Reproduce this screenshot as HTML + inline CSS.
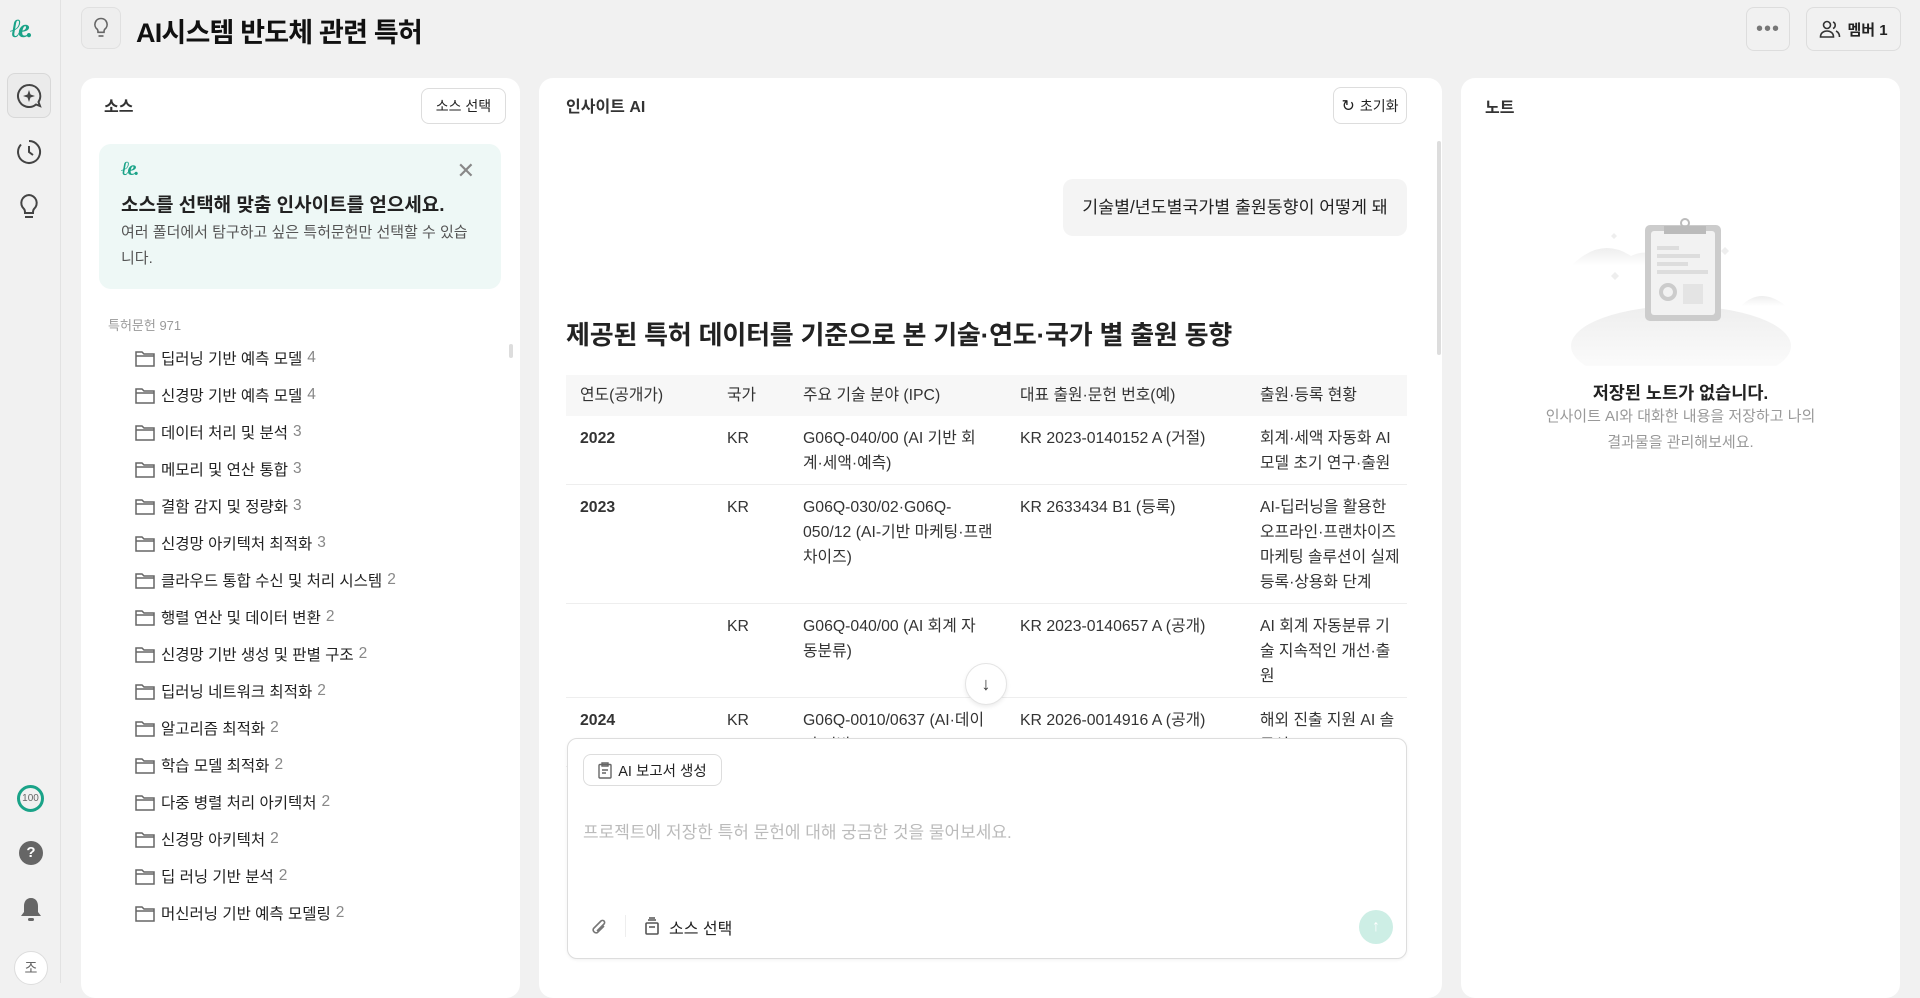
<!DOCTYPE html>
<html><head><meta charset="utf-8"><style>
*{box-sizing:border-box;margin:0;padding:0}
body{width:1920px;height:983px;overflow:hidden;background:#f1f1f1;font-family:"Liberation Sans","Noto Sans CJK KR",sans-serif;color:#111;position:relative}
.abs{position:absolute}
.rail{left:0;top:0;width:61px;height:983px;border-right:1px solid #e2e2e2;background:#f1f1f1}
.panel{position:absolute;top:78px;height:920px;background:#fff;border-radius:14px}
.btn{position:absolute;border:1px solid #ddd;border-radius:8px;background:#fff;display:flex;align-items:center;justify-content:center;font-size:14px;color:#222}
.li{position:absolute;left:135px;font-size:15.5px;color:#222;display:flex;align-items:center;height:24px}
.li svg{margin-right:6px}
.li span.n{color:#888;margin-left:5px}
table{border-collapse:collapse;font-size:15.8px;color:#333;table-layout:fixed}
td,th{vertical-align:top;text-align:left;font-weight:normal;line-height:25px;white-space:nowrap;overflow:hidden}
th{padding:8px 14px;height:41px;background:#f7f7f7}
td{padding:10px 14px 8px 14px;border-bottom:1px solid #eee}
</style></head><body>
<div class="abs rail">
 <div class="abs" style="left:10px;top:14px;color:#1aa388;font:bold italic 26px 'Liberation Serif',serif;letter-spacing:-3px">ℓe.</div>
 <div class="abs" style="left:7px;top:73px;width:44px;height:45px;border:1px solid #d8d8d8;border-radius:8px;background:#ebebeb"></div>
 <svg class="abs" style="left:16px;top:83px" width="26" height="26" viewBox="0 0 26 26" fill="none" stroke="#444" stroke-width="2"><path d="M13 2a11 11 0 1 0 7 19.5L24 23l-1.5-4A11 11 0 0 0 13 2z"/><path d="M13 7l1.5 4.5L19 13l-4.5 1.5L13 19l-1.5-4.5L7 13l4.5-1.5z" fill="#444" stroke="none"/></svg>
 <svg class="abs" style="left:16px;top:139px" width="26" height="26" viewBox="0 0 26 26" fill="none" stroke="#444" stroke-width="2"><path d="M13 2a11 11 0 1 1-8 3.5"/><path d="M13 7v6l4 3"/></svg>
 <svg class="abs" style="left:18px;top:193px" width="22" height="28" viewBox="0 0 22 28" fill="none" stroke="#444" stroke-width="2"><path d="M11 2a8 8 0 0 0-5 14c1 1 1 2 1 4h8c0-2 0-3 1-4a8 8 0 0 0-5-14z"/><path d="M7 24h8"/></svg>
 <div class="abs" style="left:17px;top:785px;width:27px;height:27px;border:3px solid #1aa388;border-radius:50%;font-size:10px;color:#666;text-align:center;line-height:21px">100</div>
 <div class="abs" style="left:19px;top:841px;width:24px;height:24px;border-radius:50%;background:#666;color:#fff;font-weight:bold;font-size:15px;text-align:center;line-height:24px">?</div>
 <svg class="abs" style="left:19px;top:896px" width="24" height="26" viewBox="0 0 24 26"><path d="M12 2c-5 0-7 4-7 8v6l-3 4h20l-3-4v-6c0-4-2-8-7-8z" fill="#666"/><rect x="9" y="22" width="6" height="3" rx="1.5" fill="#666"/></svg>
 <div class="abs" style="left:14px;top:951px;width:34px;height:34px;border:1px solid #ddd;border-radius:50%;background:#fff;font-size:14px;color:#666;text-align:center;line-height:32px">조</div>
</div>
<div class="abs" style="left:81px;top:7px;width:40px;height:42px;border:1px solid #e0e0e0;border-radius:8px;background:#eee"></div>
<svg class="abs" style="left:93px;top:17px" width="16" height="22" viewBox="0 0 16 22" fill="none" stroke="#666" stroke-width="1.6"><path d="M8 1.5a6 6 0 0 0-3.7 10.8c.7.7.7 1.5.7 3h6c0-1.5 0-2.3.7-3A6 6 0 0 0 8 1.5z"/><path d="M5.5 19h5"/></svg>
<div class="abs" style="left:136px;top:11px;font-size:27px;font-weight:bold;letter-spacing:-0.8px">AI시스템 반도체 관련 특허</div>
<div class="btn" style="left:1746px;top:7px;width:44px;height:44px;background:#f1f1f1;font-size:20px;color:#777;letter-spacing:1px">•••</div>
<div class="btn" style="left:1806px;top:7px;width:95px;height:44px;background:#f1f1f1;font-weight:bold;font-size:15px">
 <svg width="22" height="18" viewBox="0 0 22 18" fill="none" stroke="#333" stroke-width="1.6" style="margin-right:6px"><circle cx="8" cy="5" r="3.5"/><path d="M1.5 17c0-4 3-6 6.5-6s6.5 2 6.5 6z"/><path d="M14 2a3.5 3.5 0 0 1 0 6.5M17 11c2 1 3.5 3 3.5 6"/></svg>멤버 1</div>

<div class="panel" style="left:81px;width:439px">
 <div class="abs" style="left:23px;top:15px;font-size:16px;font-weight:bold;color:#333">소스</div>
 <div class="btn" style="left:340px;top:10px;width:85px;height:36px;font-size:14px">소스 선택</div>
 <div class="abs" style="left:18px;top:66px;width:402px;height:145px;border-radius:12px;background:#eef8f6">
  <div class="abs" style="left:22px;top:14px;color:#1aa388;font:bold italic 20px 'Liberation Serif',serif;letter-spacing:-2px">ℓe.</div>
  <div class="abs" style="right:26px;top:14px;font-size:22px;color:#888">✕</div>
  <div class="abs" style="left:22px;top:46px;font-size:19px;font-weight:bold;color:#222">소스를 선택해 맞춤 인사이트를 얻으세요.</div>
  <div class="abs" style="left:22px;top:76px;width:360px;font-size:15px;line-height:26px;color:#555">여러 폴더에서 탐구하고 싶은 특허문헌만 선택할 수 있습니다.</div>
 </div>
 <div class="abs" style="left:27px;top:237px;font-size:13px;color:#999">특허문헌 971</div>
 <div class="abs" style="left:428px;top:266px;width:4px;height:14px;border-radius:2px;background:#ddd"></div>
</div>

<div class="panel" style="left:539px;width:903px;overflow:hidden">
 <div class="abs" style="left:27px;top:15px;font-size:16px;font-weight:bold;color:#333">인사이트 AI</div>
 <div class="btn" style="left:794px;top:9px;width:74px;height:37px;font-size:14px"><span style="font-size:16px;margin-right:5px">↻</span>초기화</div>
 <div class="abs" style="left:898px;top:63px;width:4px;height:214px;background:#ddd;border-radius:2px"></div>
 <div class="abs" style="left:524px;top:101px;width:344px;height:57px;border-radius:10px;background:#f4f4f4;font-size:17.3px;color:#222;line-height:57px;text-align:center">기술별/년도별국가별 출원동향이 어떻게 돼</div>
 <div class="abs" style="left:27px;top:237px;font-size:26px;font-weight:bold;color:#222;letter-spacing:-0.2px">제공된 특허 데이터를 기준으로 본 기술·연도·국가 별 출원 동향</div>
 <table class="abs" style="left:27px;top:297px;width:841px">
  <colgroup><col style="width:147px"><col style="width:76px"><col style="width:217px"><col style="width:240px"><col style="width:161px"></colgroup>
  <tr><th>연도(공개가)</th><th>국가</th><th>주요 기술 분야 (IPC)</th><th>대표 출원·문헌 번호(예)</th><th>출원·등록 현황</th></tr>
  <tr><td><b>2022</b></td><td>KR</td><td>G06Q-040/00 (AI 기반 회<br>계·세액·예측)</td><td>KR 2023-0140152 A (거절)</td><td>회계·세액 자동화 AI<br>모델 초기 연구·출원</td></tr>
  <tr><td><b>2023</b></td><td>KR</td><td>G06Q-030/02·G06Q-<br>050/12 (AI-기반 마케팅·프랜<br>차이즈)</td><td>KR 2633434 B1 (등록)</td><td>AI-딥러닝을 활용한<br>오프라인·프랜차이즈<br>마케팅 솔루션이 실제<br>등록·상용화 단계</td></tr>
  <tr><td></td><td>KR</td><td>G06Q-040/00 (AI 회계 자<br>동분류)</td><td>KR 2023-0140657 A (공개)</td><td>AI 회계 자동분류 기<br>술 지속적인 개선·출<br>원</td></tr>
  <tr><td><b>2024</b></td><td>KR</td><td>G06Q-0010/0637 (AI·데이<br>터 기반)</td><td>KR 2026-0014916 A (공개)</td><td>해외 진출 지원 AI 솔<br>루션</td></tr>
 </table>
 <div class="abs" style="left:426px;top:585px;width:42px;height:42px;border-radius:50%;background:#fff;border:1px solid #e4e4e4;box-shadow:0 2px 4px rgba(0,0,0,.08);text-align:center;line-height:40px;font-size:18px;color:#333">↓</div>
 <div class="abs" style="left:28px;top:660px;width:840px;height:221px;border:1.5px solid #ddd;border-radius:10px;background:#fff;box-shadow:0 1px 3px rgba(0,0,0,.06)">
  <div class="btn" style="left:15px;top:15px;width:139px;height:32px;font-size:14.5px;color:#222"><svg width="14" height="17" viewBox="0 0 14 17" fill="none" stroke="#666" stroke-width="1.4" style="margin-right:6px"><rect x="1" y="2.5" width="12" height="13.5" rx="1"/><path d="M4 1h6v3H4zM4 8h6M4 11h4"/></svg>AI 보고서 생성</div>
  <div class="abs" style="left:15px;top:79px;font-size:17px;color:#bbb">프로젝트에 저장한 특허 문헌에 대해 궁금한 것을 물어보세요.</div>
  <svg class="abs" style="left:22px;top:178px" width="18" height="20" viewBox="0 0 18 20" fill="none" stroke="#777" stroke-width="1.6"><path d="M14 9l-6.5 6.5a3 3 0 0 1-4-4L11 4a2 2 0 0 1 3 3l-7 7"/></svg>
  <div class="abs" style="left:57px;top:176px;width:1px;height:22px;background:#eee"></div>
  <svg class="abs" style="left:77px;top:178px" width="14" height="18" viewBox="0 0 14 18" fill="none" stroke="#555" stroke-width="1.6"><rect x="1" y="6" width="12" height="11" rx="1"/><path d="M3 3h8M4 1h6M4 10h6"/></svg>
  <div class="abs" style="left:101px;top:176px;font-size:16px;color:#222">소스 선택</div>
  <div class="abs" style="left:791px;top:171px;width:34px;height:34px;border-radius:50%;background:#cdeee5;color:#fff;text-align:center;line-height:34px;font-size:16px">↑</div>
 </div>
</div>

<div class="panel" style="left:1461px;width:439px">
 <div class="abs" style="left:24px;top:16px;font-size:16px;font-weight:bold;color:#333">노트</div>
 <svg class="abs" style="left:110px;top:118px" width="220" height="170" viewBox="0 0 220 170">
  <defs><linearGradient id="g" x1="0" y1="0" x2="0" y2="1"><stop offset="0" stop-color="#eee"/><stop offset="1" stop-color="#fff"/></linearGradient></defs>
  <path d="M0 70q30-30 60-10 20-10 40 10z" fill="url(#g)"/>
  <path d="M170 110q20-20 45 0z" fill="url(#g)"/>
  <ellipse cx="110" cy="150" rx="110" ry="40" fill="url(#g)"/>
  <rect x="74" y="29" width="76" height="96" rx="5" fill="#ccc"/>
  <rect x="80" y="35" width="64" height="84" rx="3" fill="#f2f2f2"/>
  <rect x="93" y="30" width="42" height="8" fill="#bbb"/>
  <circle cx="114" cy="27" r="4" fill="none" stroke="#bbb" stroke-width="2"/>
  <rect x="86" y="50" width="22" height="4" fill="#ddd"/><rect x="86" y="58" width="43" height="4" fill="#ddd"/><rect x="86" y="66" width="31" height="4" fill="#ddd"/><rect x="86" y="74" width="51" height="4" fill="#ddd"/>
  <circle cx="97" cy="96" r="7" fill="none" stroke="#ccc" stroke-width="4"/><rect x="112" y="88" width="20" height="20" fill="#e4e4e4"/>
  <path d="M40 80l4-4 4 4-4 4z M150 55l4-4 4 4-4 4z M40 40l3-3 3 3-3 3z" fill="#eee"/>
 </svg>
 <div class="abs" style="left:0;width:439px;top:302px;text-align:center;font-size:17.5px;font-weight:bold;color:#222">저장된 노트가 없습니다.</div>
 <div class="abs" style="left:80px;width:279px;top:326px;text-align:center;font-size:15px;line-height:26px;color:#999">인사이트 AI와 대화한 내용을 저장하고 나의 결과물을 관리해보세요.</div>
</div>

<div class="li" style="top:346px"><svg width="20" height="17" viewBox="0 0 20 17" fill="none" stroke="#666" stroke-width="1.5"><path d="M1 2h6l2 2h10v12H1z"/><path d="M1 6h18"/></svg>딥러닝 기반 예측 모델<span class="n">4</span></div>
<div class="li" style="top:383px"><svg width="20" height="17" viewBox="0 0 20 17" fill="none" stroke="#666" stroke-width="1.5"><path d="M1 2h6l2 2h10v12H1z"/><path d="M1 6h18"/></svg>신경망 기반 예측 모델<span class="n">4</span></div>
<div class="li" style="top:420px"><svg width="20" height="17" viewBox="0 0 20 17" fill="none" stroke="#666" stroke-width="1.5"><path d="M1 2h6l2 2h10v12H1z"/><path d="M1 6h18"/></svg>데이터 처리 및 분석<span class="n">3</span></div>
<div class="li" style="top:457px"><svg width="20" height="17" viewBox="0 0 20 17" fill="none" stroke="#666" stroke-width="1.5"><path d="M1 2h6l2 2h10v12H1z"/><path d="M1 6h18"/></svg>메모리 및 연산 통합<span class="n">3</span></div>
<div class="li" style="top:494px"><svg width="20" height="17" viewBox="0 0 20 17" fill="none" stroke="#666" stroke-width="1.5"><path d="M1 2h6l2 2h10v12H1z"/><path d="M1 6h18"/></svg>결함 감지 및 정량화<span class="n">3</span></div>
<div class="li" style="top:531px"><svg width="20" height="17" viewBox="0 0 20 17" fill="none" stroke="#666" stroke-width="1.5"><path d="M1 2h6l2 2h10v12H1z"/><path d="M1 6h18"/></svg>신경망 아키텍처 최적화<span class="n">3</span></div>
<div class="li" style="top:568px"><svg width="20" height="17" viewBox="0 0 20 17" fill="none" stroke="#666" stroke-width="1.5"><path d="M1 2h6l2 2h10v12H1z"/><path d="M1 6h18"/></svg>클라우드 통합 수신 및 처리 시스템<span class="n">2</span></div>
<div class="li" style="top:605px"><svg width="20" height="17" viewBox="0 0 20 17" fill="none" stroke="#666" stroke-width="1.5"><path d="M1 2h6l2 2h10v12H1z"/><path d="M1 6h18"/></svg>행렬 연산 및 데이터 변환<span class="n">2</span></div>
<div class="li" style="top:642px"><svg width="20" height="17" viewBox="0 0 20 17" fill="none" stroke="#666" stroke-width="1.5"><path d="M1 2h6l2 2h10v12H1z"/><path d="M1 6h18"/></svg>신경망 기반 생성 및 판별 구조<span class="n">2</span></div>
<div class="li" style="top:679px"><svg width="20" height="17" viewBox="0 0 20 17" fill="none" stroke="#666" stroke-width="1.5"><path d="M1 2h6l2 2h10v12H1z"/><path d="M1 6h18"/></svg>딥러닝 네트워크 최적화<span class="n">2</span></div>
<div class="li" style="top:716px"><svg width="20" height="17" viewBox="0 0 20 17" fill="none" stroke="#666" stroke-width="1.5"><path d="M1 2h6l2 2h10v12H1z"/><path d="M1 6h18"/></svg>알고리즘 최적화<span class="n">2</span></div>
<div class="li" style="top:753px"><svg width="20" height="17" viewBox="0 0 20 17" fill="none" stroke="#666" stroke-width="1.5"><path d="M1 2h6l2 2h10v12H1z"/><path d="M1 6h18"/></svg>학습 모델 최적화<span class="n">2</span></div>
<div class="li" style="top:790px"><svg width="20" height="17" viewBox="0 0 20 17" fill="none" stroke="#666" stroke-width="1.5"><path d="M1 2h6l2 2h10v12H1z"/><path d="M1 6h18"/></svg>다중 병렬 처리 아키텍처<span class="n">2</span></div>
<div class="li" style="top:827px"><svg width="20" height="17" viewBox="0 0 20 17" fill="none" stroke="#666" stroke-width="1.5"><path d="M1 2h6l2 2h10v12H1z"/><path d="M1 6h18"/></svg>신경망 아키텍처<span class="n">2</span></div>
<div class="li" style="top:864px"><svg width="20" height="17" viewBox="0 0 20 17" fill="none" stroke="#666" stroke-width="1.5"><path d="M1 2h6l2 2h10v12H1z"/><path d="M1 6h18"/></svg>딥 러닝 기반 분석<span class="n">2</span></div>
<div class="li" style="top:901px"><svg width="20" height="17" viewBox="0 0 20 17" fill="none" stroke="#666" stroke-width="1.5"><path d="M1 2h6l2 2h10v12H1z"/><path d="M1 6h18"/></svg>머신러닝 기반 예측 모델링<span class="n">2</span></div>
</body></html>
